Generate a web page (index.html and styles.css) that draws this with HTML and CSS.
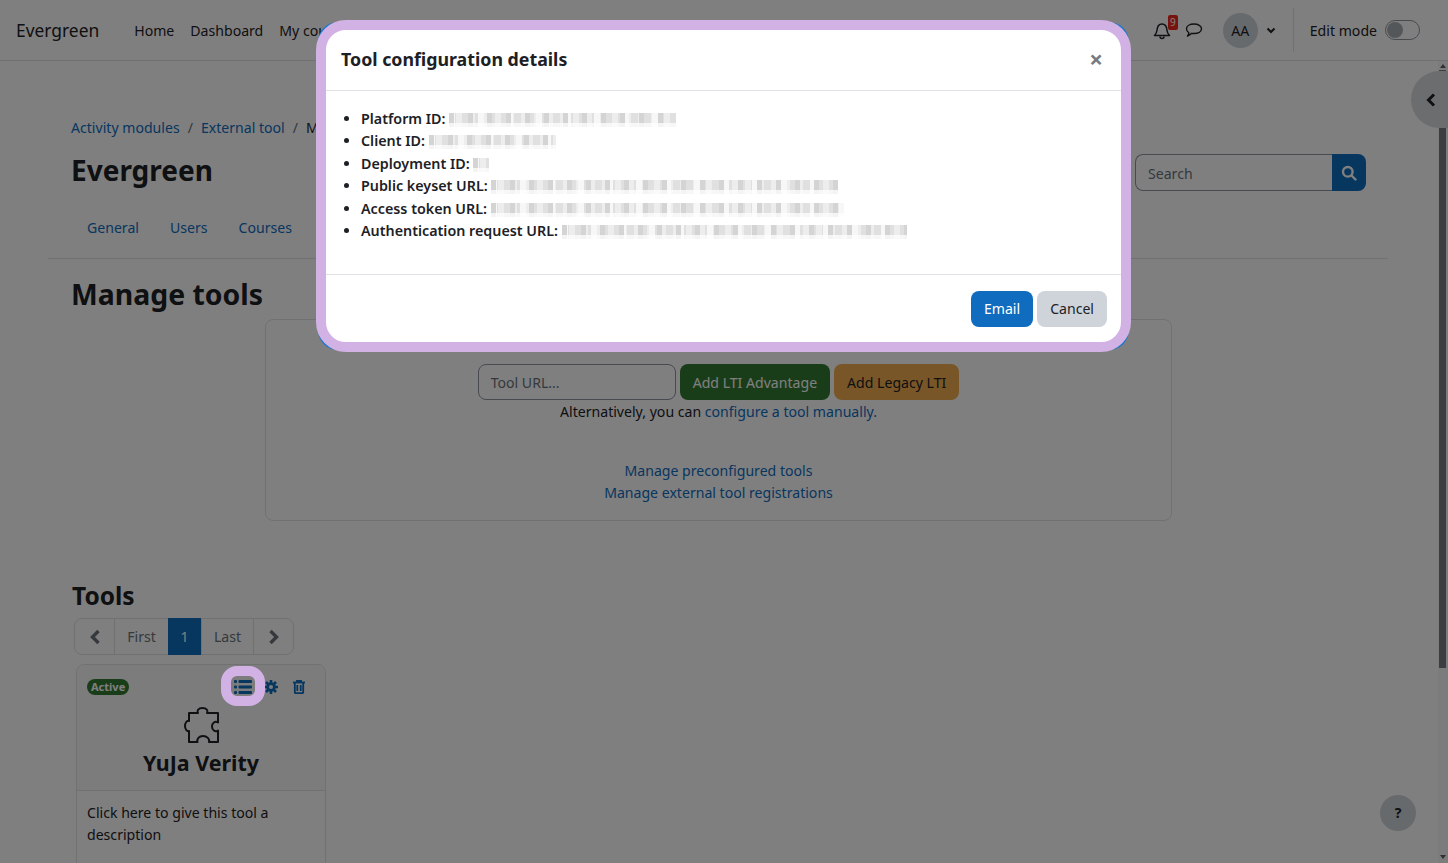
FILE: index.html
```html
<!DOCTYPE html>
<html lang="en">
<head>
    <meta charset="UTF-8">
    <title>Manage tools</title>
    <link rel="stylesheet" href="styles.css">
</head>
<body>
    <nav class="navbar">
        <div class="brand">Evergreen</div>
        <div class="nav-links">
            <a>Home</a>
            <a>Dashboard</a>
            <a>My courses</a>
        </div>
        <div class="nav-right">
            <span class="bell">
                <svg width="18" height="20" viewBox="0 0 18 20" fill="none" stroke="#1d2125" stroke-width="1.5"><path d="M1.5 15.5c1.6-1.5 2.3-3 2.5-5.2.2-3 .8-6.3 5-6.3s4.800 3.300 5 6.300c.2 2.200.9 3.700 2.500 5.200z" stroke-linejoin="round"/><path d="M7 16.500c0 2.700 4 2.700 4 0"/></svg>
                <span class="bell-count">9</span>
            </span>
            <svg class="chat" width="18" height="16" viewBox="0 0 18 16" fill="none" stroke="#1d2125" stroke-width="1.4"><path d="M9 2c4 0 7.500 1.800 7.500 4.800S13 11.500 9 11.500c-.8 0-1.500 0-2.200-.2C5.500 12.500 4 13.500 2.500 14c.8-1 1.300-2.200 1.300-3.300C2.300 9.800 1.500 8.400 1.500 6.800 1.500 3.800 5 2 9 2z" stroke-linejoin="round"/></svg>
            <span class="avatar">AA</span>
            <svg class="caret" width="10" height="7" viewBox="0 0 10 7" fill="none" stroke="#1d2125" stroke-width="2"><path d="M1.500 1.500 5 5l3.500-3.500"/></svg>
            <span class="nav-divider"></span>
            <span class="edit-label">Edit mode</span>
            <span class="switch"><span class="switch-knob"></span></span>
        </div>
    </nav>

    <main class="page">
        <header class="page-header">
            <div class="page-heading">
                <div class="breadcrumb">
                    <a>Activity modules</a><span class="sep">/</span>
                    <a>External tool</a><span class="sep">/</span>
                    <span>Manage tools</span>
                </div>
                <h1>Evergreen</h1>
            </div>
            <div class="search">
                <div class="search-input">Search</div>
                <div class="search-btn">
                    <svg width="16" height="16" viewBox="0 0 16 16" fill="none" stroke="#fff" stroke-width="2.400"><circle cx="6.800" cy="6.800" r="4.800"/><path d="m10.500 10.500 4 4" stroke-linecap="round"/></svg>
                </div>
            </div>
        </header>

        <div class="tabs">
            <a>General</a>
            <a>Users</a>
            <a>Courses</a>
        </div>

        <section class="content">
            <h2>Manage tools</h2>
            <div class="add-box">
                <div class="add-row">
                    <div class="url-input">Tool URL...</div>
                    <button class="btn btn-green">Add LTI Advantage</button>
                    <button class="btn btn-orange">Add Legacy LTI</button>
                </div>
                <div class="add-note">Alternatively, you can <a>configure a tool manually.</a></div>
                <div class="add-links">
                    <a>Manage preconfigured tools</a>
                    <a>Manage external tool registrations</a>
                </div>
            </div>

            <h3>Tools</h3>
            <div class="pager">
                <span class="pager-item pager-arrow">
                    <svg width="12" height="16" viewBox="0 0 12 16" fill="none" stroke="#6a737b" stroke-width="3.400"><path d="M9.500 2 3.500 8l6 6"/></svg>
                </span>
                <span class="pager-item pager-text">First</span>
                <span class="pager-item pager-current">1</span>
                <span class="pager-item pager-text">Last</span>
                <span class="pager-item pager-arrow">
                    <svg width="12" height="16" viewBox="0 0 12 16" fill="none" stroke="#6a737b" stroke-width="3.400"><path d="M2.500 2l6 6-6 6"/></svg>
                </span>
            </div>

            <div class="tool-card">
                <div class="tool-head">
                    <div class="tool-top">
                        <span class="badge">Active</span>
                        <span class="tool-actions">
                            <svg class="list-icon" width="18" height="16" viewBox="0 0 18 16" fill="#0f6cbf"><rect x="0" y="1" width="3" height="3" rx="1"/><rect x="0" y="6.500" width="3" height="3" rx="1"/><rect x="0" y="12" width="3" height="3" rx="1"/><rect x="4.500" y="1" width="13.500" height="3" rx="1"/><rect x="4.500" y="6.500" width="13.500" height="3" rx="1"/><rect x="4.500" y="12" width="13.500" height="3" rx="1"/></svg>
                            <svg width="14" height="14" viewBox="0 0 14 14" fill="none" stroke="#0f6cbf"><circle cx="7" cy="7" r="3.400" stroke-width="2.800"/><path d="M7 0v3M7 11v3M0 7h3M11 7h3M2 2l2 2M10 10l2 2M12 2l-2 2M4 10l-2 2" stroke-width="2.600"/></svg>
                            <svg class="trash-icon" width="12" height="14" viewBox="0 0 12 14" fill="none" stroke="#0f6cbf" stroke-width="1.800"><path d="M0 2.500h12" /><path d="M4 2.500V1h4v1.500"/><path d="M1.800 3v9.200c0 .6.400 1 1 1h6.400c.6 0 1-.4 1-1V3"/><path d="M4.300 5v6M7.700 5v6"/></svg>
                        </span>
                    </div>
                    <svg class="puzzle" width="36" height="36" viewBox="0 0 36 36" fill="none" stroke="#1d2125" stroke-width="2" stroke-linejoin="round"><path d="M5 6h9c-1.500-2.500.5-5 4.500-5s6 2.500 4.500 5h11v9.500c-3-2-6 .5-6 4s3 6 6 4V35h-9c1-3-2-6-6-6s-6.500 3-5.500 6H5V24c-2 1-4-2-4-5s2-6 4-5z"/></svg>
                    <div class="tool-name">YuJa Verity</div>
                </div>
                <div class="tool-body">Click here to give this tool a description</div>
            </div>
        </section>
    </main>

    <div class="help-btn">?</div>
    <div class="scrollbar">
        <span class="scroll-up"></span>
        <span class="scroll-thumb"></span>
        <span class="scroll-down"></span>
    </div>
    <div class="drawer-toggle">
        <svg width="10" height="14" viewBox="0 0 10 14" fill="none" stroke="#1d2125" stroke-width="3"><path d="M8 1.500 2.500 7 8 12.500"/></svg>
    </div>

    <div class="backdrop"></div>
    <div class="list-mark"></div>

    <div class="modal-ring">
        <div class="modal">
            <div class="modal-head">
                <h5>Tool configuration details</h5>
                <span class="modal-close">×</span>
            </div>
            <ul class="modal-body">
                <li><b>Platform ID:</b> <span class="redact redact-platform"></span></li>
                <li><b>Client ID:</b> <span class="redact redact-client"></span></li>
                <li><b>Deployment ID:</b> <span class="redact redact-deploy"></span></li>
                <li><b>Public keyset URL:</b> <span class="redact redact-keyset"></span></li>
                <li><b>Access token URL:</b> <span class="redact redact-token"></span></li>
                <li><b>Authentication request URL:</b> <span class="redact redact-auth"></span></li>
            </ul>
            <div class="modal-foot">
                <button class="btn btn-primary">Email</button>
                <button class="btn btn-secondary">Cancel</button>
            </div>
        </div>
    </div>
</body>
</html>
```

FILE: styles.css
```css
* {
    box-sizing: border-box;
}

html, body {
    height: 100%;
}

body {
    margin: 0;
    height: 863px;
    overflow: hidden;
    font-family: "Noto Sans", "Open Sans", sans-serif;
    font-size: 14.100px;
    line-height: 22px;
    color: #1d2125;
    background-color: #fff;
}

a {
    color: #0f6cbf;
}

.navbar {
    display: flex;
    align-items: center;
    height: 61px;
    padding: 0 28px 0 16px;
    border-bottom: 1px solid #dee2e6;
}

.brand {
    font-size: 17.400px;
    margin-right: 35px;
}

.nav-links {
    display: flex;
    gap: 16px;
    padding-top: 2px;
}

.nav-links a {
    color: #1d2125;
}

.nav-right {
    display: flex;
    align-items: center;
    margin-left: auto;
}

.bell {
    position: relative;
    display: flex;
    margin-right: 14px;
}

.bell-count {
    position: absolute;
    top: -5px;
    left: 15px;
    width: 10px;
    height: 15px;
    background: #f0281c;
    color: #fff;
    font-size: 10px;
    line-height: 15px;
    text-align: center;
    border-radius: 2px;
}

.avatar {
    width: 35px;
    height: 35px;
    margin-left: 20px;
    border-radius: 50%;
    background: #ced4da;
    text-align: center;
    line-height: 35px;
}

.caret {
    margin-left: 8px;
}

.nav-divider {
    width: 1px;
    height: 44px;
    margin: 0 16px 0 17px;
    background: #dee2e6;
}

.edit-label {
    padding-top: 2px;
}

.switch {
    display: flex;
    align-items: center;
    width: 35px;
    height: 20px;
    margin-left: 8px;
    padding: 1px;
    border: 1px solid #8f959e;
    border-radius: 10px;
}

.switch-knob {
    width: 16px;
    height: 16px;
    border-radius: 50%;
    background: #a9aeb4;
}

.page {
    padding: 0 60px 0 48px;
}

.page-header {
    display: flex;
    justify-content: space-between;
    align-items: flex-start;
    padding: 56px 22px 0 23px;
    height: 150px;
}

.breadcrumb {
    display: flex;
    color: #1d2125;
    white-space: nowrap;
}

.sep {
    margin: 0 8px;
    color: #6a737b;
}

h1 {
    margin: 11px 0 0;
    font-size: 28px;
    line-height: 40px;
    font-weight: 700;
}

.search {
    display: flex;
    margin-top: 37px;
    height: 37px;
}

.search-input {
    width: 197px;
    padding: 8px 12px 6px;
    border: 1px solid #8f959e;
    border-right: 0;
    border-radius: 8px 0 0 8px;
    color: #6a737b;
}

.search-btn {
    display: flex;
    align-items: center;
    justify-content: center;
    width: 34px;
    background: #0f6cbf;
    border-radius: 0 8px 8px 0;
}

.tabs {
    display: flex;
    gap: 31px;
    height: 48px;
    padding: 6px 0 0 39px;
    border-bottom: 1px solid #dee2e6;
}

.content {
    padding: 15px 0 0 24px;
}

h2 {
    margin: 0 0 0 -1px;
    font-size: 28.400px;
    line-height: 40px;
    font-weight: 700;
}

.add-box {
    display: flex;
    flex-direction: column;
    align-items: center;
    width: 907px;
    height: 202px;
    margin: 5px 0 0 193px;
    padding-top: 44px;
    border: 1px solid #dee2e6;
    border-radius: 8px;
}

.add-row {
    display: flex;
    gap: 4px;
    height: 36px;
}

.url-input {
    width: 198px;
    padding: 7px 12px 5px;
    border: 1px solid #8f959e;
    border-radius: 8px;
    color: #6a737b;
}

.btn {
    padding: 1px 13px 0;
    border: 0;
    border-radius: 8px;
    font: inherit;
}

.btn-green {
    background: #357a32;
    color: #fff;
}

.btn-orange {
    background: #f0ad4e;
    color: #1d2125;
}

.add-note {
    margin-top: 1px;
}

.add-links {
    display: flex;
    flex-direction: column;
    align-items: center;
    margin-top: 37px;
}

h3 {
    margin: 59px 0 0;
    font-size: 24.500px;
    line-height: 32px;
    font-weight: 700;
}

.pager {
    display: flex;
    width: 220px;
    height: 37px;
    margin: 6px 0 0 2px;
    border: 1px solid #dee2e6;
    border-radius: 8px;
}

.pager-item {
    display: flex;
    align-items: center;
    justify-content: center;
    color: #6a737b;
}

.pager-arrow {
    flex: 1;
}

.pager-text {
    width: 54px;
    border-left: 1px solid #dee2e6;
}

.pager-current + .pager-text {
    width: 52px;
}

.pager-text + .pager-arrow {
    border-left: 1px solid #dee2e6;
}

.pager-current {
    width: 33px;
    margin: -1px 0;
    background: #0f6cbf;
    color: #fff;
}

.tool-card {
    width: 250px;
    height: 260px;
    margin: 9px 0 0 4px;
    border: 1px solid #dee2e6;
    border-radius: 8px;
}

.tool-head {
    display: flex;
    flex-direction: column;
    align-items: center;
    height: 126px;
    padding: 10px 10px 0;
    background: #f8f9fa;
    border-bottom: 1px solid #dee2e6;
    border-radius: 8px 8px 0 0;
}

.tool-top {
    display: flex;
    justify-content: space-between;
    align-items: center;
    width: 100%;
    height: 24px;
}

.badge {
    padding: 0 4px;
    background: #357a32;
    color: #fff;
    font-size: 11px;
    line-height: 16px;
    font-weight: 700;
    border-radius: 8px;
}

.tool-actions {
    display: flex;
    align-items: center;
    gap: 12px;
    margin-right: 10px;
}

.trash-icon {
    margin-left: 3px;
}

.puzzle {
    margin: 8px 0 0 1px;
    flex-shrink: 0;
}

.tool-name {
    margin-top: 5px;
    font-size: 21.400px;
    line-height: 30px;
    font-weight: 700;
}

.tool-body {
    padding: 11px 10px;
}

.help-btn {
    position: absolute;
    left: 1380px;
    top: 795px;
    width: 36px;
    height: 36px;
    border-radius: 50%;
    background: #ced4da;
    font-weight: 700;
    line-height: 36px;
    text-align: center;
}

.scrollbar {
    position: absolute;
    top: 61px;
    right: 0;
    bottom: 0;
    width: 10px;
    background: #f8f8f8;
}

.scroll-thumb {
    position: absolute;
    top: 9px;
    left: 1px;
    width: 7px;
    height: 598px;
    background: #767a80;
}

.scroll-up, .scroll-down {
    position: absolute;
    left: 2px;
    border-left: 3px solid transparent;
    border-right: 3px solid transparent;
}

.scroll-up {
    top: 3px;
    border-bottom: 4px solid #606060;
}

.scroll-down {
    bottom: 4px;
    border-top: 4px solid #606060;
}

.drawer-toggle {
    position: absolute;
    left: 1411px;
    top: 71px;
    display: flex;
    align-items: center;
    width: 37px;
    height: 57px;
    padding-left: 15px;
    background: #d8dadc;
    border-radius: 29px 0 0 29px;
}

.backdrop {
    position: fixed;
    inset: 0;
    background: rgba(0, 0, 0, 0.5);
}

/* annotation around the list icon */
.list-mark {
    position: absolute;
    left: 221px;
    top: 666px;
    width: 44px;
    height: 40px;
    border: 10px solid #d2b2e4;
    border-radius: 16px;
}

.modal-ring {
    position: absolute;
    left: 316px;
    top: 20px;
    width: 815px;
    height: 332px;
}

/* the real dialog edge peeks out at the corners of the annotation */
.modal-ring::before {
    content: "";
    position: absolute;
    inset: 2px;
    background: #1b78cc;
    border-radius: 20px;
}

.modal {
    position: relative;
    display: flex;
    flex-direction: column;
    height: 100%;
    background: #fff;
    border: 10px solid #d2b2e4;
    border-radius: 30px;
}

.modal-head {
    display: flex;
    justify-content: space-between;
    align-items: center;
    height: 61px;
    padding: 0 18px 2px 15px;
    border-bottom: 1px solid #dee2e6;
}

h5 {
    margin: 0;
    font-size: 17.800px;
    line-height: 26px;
    font-weight: 700;
}

.modal-close {
    color: #777b80;
    font-size: 24px;
    font-weight: 700;
}

.modal-body {
    flex: 1;
    margin: 0;
    padding: 16.500px 0 0 35px;
    font-size: 14.300px;
    line-height: 22.500px;
}

.modal-body b {
    font-weight: 600;
}

.redact {
    display: inline-block;
    height: 16px;
    vertical-align: -3px;
    background-color: #ededed;
    background-image:
        linear-gradient(180deg, #fff 0 2px, transparent 2px 12px, rgba(255, 255, 255, 0.75) 12px),
        repeating-linear-gradient(90deg, #d4d4d4 0 5px, transparent 5px 19px),
        repeating-linear-gradient(90deg, #f7f7f7 0 6px, transparent 6px 29px),
        repeating-linear-gradient(90deg, #e0e0e0 0 7px, transparent 7px 13px);
    filter: blur(0.6px);
}

.redact-platform { width: 227px; }
.redact-client { width: 127px; }
.redact-deploy { width: 16px; }
.redact-keyset { width: 347px; }
.redact-token { width: 353px; }
.redact-auth { width: 345px; }

.modal-foot {
    display: flex;
    justify-content: flex-end;
    align-items: center;
    gap: 4px;
    height: 68px;
    padding: 0 14px;
    border-top: 1px solid #dee2e6;
}

.modal-foot .btn {
    height: 36px;
}

.btn-primary {
    background: #0f6cbf;
    color: #fff;
}

.btn-secondary {
    background: #ced4da;
    color: #1d2125;
}
```
